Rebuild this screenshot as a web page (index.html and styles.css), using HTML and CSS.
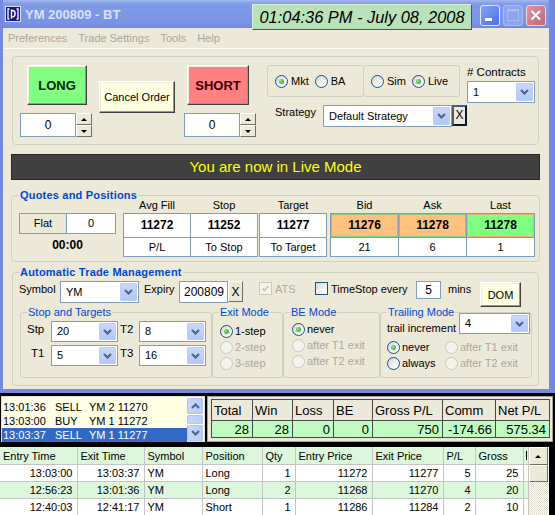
FILE: index.html
```html
<!DOCTYPE html>
<html lang="en">
<head>
    <meta charset="UTF-8">
    <title>YM 200809 - BT</title>
    <link rel="stylesheet" href="styles.css">
</head>
<body>
    <!-- MAIN WINDOW -->
    <div class="window">
        <div class="titlebar">
            <svg class="app-icon" width="16" height="16" viewBox="0 0 16 16">
                <rect x="0.5" y="0.5" width="15" height="15" fill="#16168a" stroke="#d8dcf4"/>
                <path d="M4.5 3H3v10h1.5M11.5 3H13v10h-1.5" stroke="#fff" stroke-width="1.3" fill="none"/>
                <path d="M6.5 3.5v9M6.5 4.2c2.6 0 3.6 1.5 3.6 3.4S9 11 7.4 11" stroke="#fff" stroke-width="1.4" fill="none"/>
            </svg>
            <span class="title">YM 200809 - BT</span>
            <div class="clock">01:04:36 PM - July 08, 2008</div>
            <span class="cap cap-min"><svg width="18" height="19"><rect x="4" y="12" width="7" height="3" fill="#fff"/></svg></span>
            <span class="cap cap-max"><svg width="18" height="19"><rect x="3.5" y="3.5" width="11" height="11" fill="none" stroke="#a9bbf0"/><rect x="3.5" y="3.5" width="11" height="2" fill="#a9bbf0"/></svg></span>
            <span class="cap cap-close"><svg width="18" height="19"><path d="M4.5 5l8.5 8.5M13 5l-8.5 8.5" stroke="#fff" stroke-width="2"/></svg></span>
        </div>

        <div class="menubar">
            <span>Preferences</span>
            <span>Trade Settings</span>
            <span>Tools</span>
            <span>Help</span>
        </div>

        <div class="client">
            <!-- ORDER ENTRY -->
            <div class="order-box">
                <div class="order-col">
                    <button class="btn3d big-btn long">LONG</button>
                    <div class="spinner">
                        <div class="spin-input">0</div>
                        <div class="spin-btns">
                            <span><i class="tri-up"></i></span>
                            <span><i class="tri-down"></i></span>
                        </div>
                    </div>
                </div>

                <button class="btn3d cancel-btn">Cancel Order</button>

                <div class="order-col short-col">
                    <button class="btn3d big-btn short">SHORT</button>
                    <div class="spinner">
                        <div class="spin-input">0</div>
                        <div class="spin-btns">
                            <span><i class="tri-up"></i></span>
                            <span><i class="tri-down"></i></span>
                        </div>
                    </div>
                </div>

                <div class="opts">
                    <div class="radio-row">
                        <div class="radio-box">
                            <span class="opt"><span class="radio on"></span>Mkt</span>
                            <span class="opt next"><span class="radio"></span>BA</span>
                        </div>
                        <div class="radio-box">
                            <span class="opt"><span class="radio"></span>Sim</span>
                            <span class="opt next"><span class="radio on"></span>Live</span>
                        </div>
                    </div>
                    <div class="strategy-row">
                        <span class="strategy-label">Strategy</span>
                        <div class="combo combo-strategy">
                            <span class="combo-text">Default Strategy</span>
                            <span class="combo-btn"><svg width="9" height="6"><path d="M1 1l3.5 3.5L8 1" stroke="#4d6185" stroke-width="2" fill="none"/></svg></span>
                        </div>
                        <button class="x-btn focused">X</button>
                    </div>
                </div>

                <div class="contracts">
                    <div class="contracts-label"># Contracts</div>
                    <div class="combo combo-contracts">
                        <span class="combo-text">1</span>
                        <span class="combo-btn"><svg width="9" height="6"><path d="M1 1l3.5 3.5L8 1" stroke="#4d6185" stroke-width="2" fill="none"/></svg></span>
                    </div>
                </div>
            </div>

            <div class="mode-bar">You are now in Live Mode</div>

            <!-- QUOTES AND POSITIONS -->
            <fieldset class="group quotes">
                <legend>Quotes and Positions</legend>
                <div class="quotes-row">
                    <div class="pos">
                        <div class="pos-row">
                            <span class="pos-flat">Flat</span>
                            <span class="pos-qty">0</span>
                        </div>
                        <div class="pos-time">00:00</div>
                    </div>

                    <div class="qgroup g1">
                        <div class="qcol">
                            <div class="qhead">Avg Fill</div>
                            <div class="qval">11272</div>
                            <div class="qsub">P/L</div>
                        </div>
                        <div class="qcol">
                            <div class="qhead">Stop</div>
                            <div class="qval">11252</div>
                            <div class="qsub">To Stop</div>
                        </div>
                    </div>

                    <div class="qgroup g2">
                        <div class="qcol">
                            <div class="qhead">Target</div>
                            <div class="qval">11277</div>
                            <div class="qsub">To Target</div>
                        </div>
                    </div>

                    <div class="qgroup g3">
                        <div class="qcol wide">
                            <div class="qhead">Bid</div>
                            <div class="qval bid">11276</div>
                            <div class="qsub">21</div>
                        </div>
                        <div class="qcol wide">
                            <div class="qhead">Ask</div>
                            <div class="qval bid">11278</div>
                            <div class="qsub">6</div>
                        </div>
                        <div class="qcol wide">
                            <div class="qhead">Last</div>
                            <div class="qval last">11278</div>
                            <div class="qsub">1</div>
                        </div>
                    </div>
                </div>
            </fieldset>

            <!-- AUTOMATIC TRADE MANAGEMENT -->
            <fieldset class="group atm">
                <legend>Automatic Trade Management</legend>
                <div class="atm-row">
                    <span class="lbl symbol-lbl">Symbol</span>
                    <div class="combo combo-symbol">
                        <span class="combo-text">YM</span>
                        <span class="combo-btn"><svg width="9" height="6"><path d="M1 1l3.5 3.5L8 1" stroke="#4d6185" stroke-width="2" fill="none"/></svg></span>
                    </div>
                    <span class="lbl expiry-lbl">Expiry</span>
                    <div class="text-box expiry">200809</div>
                    <button class="x-btn">X</button>
                    <span class="check dis ats-check"><svg width="11" height="11"><path d="M2.5 5.5l2 2 4-4.5" stroke="#cac8bb" stroke-width="1.8" fill="none"/></svg></span>
                    <span class="lbl ats-lbl">ATS</span>
                    <span class="check"></span>
                    <span class="lbl time-lbl">TimeStop every</span>
                    <div class="text-box mins-box">5</div>
                    <span class="lbl mins-lbl">mins</span>
                    <button class="btn3d dom-btn">DOM</button>
                </div>

                <div class="sub-row">
                    <fieldset class="sub st">
                        <legend>Stop and Targets</legend>
                        <div class="st-grid">
                            <span class="st-lbl">Stp</span>
                            <div class="combo">
                                <span class="combo-text">20</span>
                                <span class="combo-btn"><svg width="9" height="6"><path d="M1 1l3.5 3.5L8 1" stroke="#4d6185" stroke-width="2" fill="none"/></svg></span>
                            </div>
                            <span class="st-lbl pad2">T2</span>
                            <div class="combo">
                                <span class="combo-text">8</span>
                                <span class="combo-btn"><svg width="9" height="6"><path d="M1 1l3.5 3.5L8 1" stroke="#4d6185" stroke-width="2" fill="none"/></svg></span>
                            </div>
                            <span class="st-lbl pad4">T1</span>
                            <div class="combo">
                                <span class="combo-text">5</span>
                                <span class="combo-btn"><svg width="9" height="6"><path d="M1 1l3.5 3.5L8 1" stroke="#4d6185" stroke-width="2" fill="none"/></svg></span>
                            </div>
                            <span class="st-lbl pad2">T3</span>
                            <div class="combo">
                                <span class="combo-text">16</span>
                                <span class="combo-btn"><svg width="9" height="6"><path d="M1 1l3.5 3.5L8 1" stroke="#4d6185" stroke-width="2" fill="none"/></svg></span>
                            </div>
                        </div>
                    </fieldset>

                    <fieldset class="sub exit">
                        <legend>Exit Mode</legend>
                        <div class="radio-list">
                            <span class="opt"><span class="radio on"></span>1-step</span>
                            <span class="opt dis"><span class="radio off"></span>2-step</span>
                            <span class="opt dis"><span class="radio off"></span>3-step</span>
                        </div>
                    </fieldset>

                    <fieldset class="sub be">
                        <legend>BE Mode</legend>
                        <div class="radio-list">
                            <span class="opt"><span class="radio on"></span>never</span>
                            <span class="opt dis"><span class="radio off"></span>after T1 exit</span>
                            <span class="opt dis"><span class="radio off"></span>after T2 exit</span>
                        </div>
                    </fieldset>

                    <fieldset class="sub trail">
                        <legend>Trailing Mode</legend>
                        <div class="trail-row">
                            <span class="trail-lbl">trail increment</span>
                            <div class="combo combo-trail">
                                <span class="combo-text">4</span>
                                <span class="combo-btn"><svg width="9" height="6"><path d="M1 1l3.5 3.5L8 1" stroke="#4d6185" stroke-width="2" fill="none"/></svg></span>
                            </div>
                        </div>
                        <div class="trail-grid">
                            <span class="opt"><span class="radio on"></span>never</span>
                            <span class="opt dis"><span class="radio off"></span>after T1 exit</span>
                            <span class="opt"><span class="radio"></span>always</span>
                            <span class="opt dis"><span class="radio off"></span>after T2 exit</span>
                        </div>
                    </fieldset>
                </div>
            </fieldset>
        </div>
    </div>

    <!-- ORDER LOG / STATS / TRADES -->
    <div class="bottom">
        <div class="bottom-top">
            <div class="log">
                <div class="log-rows">
                    <div class="log-row"><span class="t">13:01:36</span><span class="a">SELL</span><span>YM 2 11270</span></div>
                    <div class="log-row"><span class="t">13:03:00</span><span class="a">BUY</span><span>YM 1 11272</span></div>
                    <div class="log-row selected"><span class="t">13:03:37</span><span class="a">SELL</span><span>YM 1 11277</span></div>
                </div>
                <div class="log-scroll">
                    <span class="sb-btn"><svg width="9" height="6"><path d="M1 5l3.5-3.5L8 5" stroke="#4d6185" stroke-width="2" fill="none"/></svg></span>
                    <span class="sb-thumb"></span>
                    <span class="sb-btn"><svg width="9" height="6"><path d="M1 1l3.5 3.5L8 1" stroke="#4d6185" stroke-width="2" fill="none"/></svg></span>
                </div>
            </div>

            <div class="stats">
                <table>
                    <colgroup>
                        <col style="width:41px"><col style="width:40px"><col style="width:41px"><col style="width:39px">
                        <col style="width:70px"><col style="width:53px"><col style="width:54px">
                    </colgroup>
                    <tr>
                        <th>Total</th><th>Win</th><th>Loss</th><th>BE</th><th>Gross P/L</th><th>Comm</th><th>Net P/L</th>
                    </tr>
                    <tr>
                        <td>28</td><td>28</td><td>0</td><td>0</td><td>750</td><td>-174.66</td><td>575.34</td>
                    </tr>
                </table>
            </div>
        </div>

        <div class="grid">
            <table>
                <colgroup>
                    <col style="width:77px"><col style="width:67px"><col style="width:58px"><col style="width:60px">
                    <col style="width:33px"><col style="width:77px"><col style="width:71px"><col style="width:32px">
                    <col style="width:48px"><col style="width:5px">
                </colgroup>
                <tr>
                    <th>Entry Time</th><th>Exit Time</th><th>Symbol</th><th>Position</th><th>Qty</th>
                    <th>Entry Price</th><th>Exit Price</th><th>P/L</th><th>Gross</th><th class="stub"><i></i></th>
                </tr>
                <tr>
                    <td class="r">13:03:00</td><td class="r">13:03:37</td><td>YM</td><td>Long</td><td class="r">1</td>
                    <td class="r">11272</td><td class="r">11277</td><td class="r">5</td><td class="r">25</td><td></td>
                </tr>
                <tr class="alt">
                    <td class="r">12:56:23</td><td class="r">13:01:36</td><td>YM</td><td>Long</td><td class="r">2</td>
                    <td class="r">11268</td><td class="r">11270</td><td class="r">4</td><td class="r">20</td><td></td>
                </tr>
                <tr>
                    <td class="r">12:40:03</td><td class="r">12:41:17</td><td>YM</td><td>Short</td><td class="r">1</td>
                    <td class="r">11286</td><td class="r">11284</td><td class="r">2</td><td class="r">10</td><td></td>
                </tr>
            </table>
            <div class="grid-scroll">
                <span class="cl-btn"><i class="tri-up"></i></span>
                <span class="cl-thumb"></span>
            </div>
        </div>
    </div>
</body>
</html>
```

FILE: styles.css
```css
/* === GENERAL === */
body {
    margin: 0;
    background-color: #000;
    font-family: "Liberation Sans", Arial, sans-serif;
    font-size: 11px;
    color: #000;
}

button {
    font: inherit;
    color: inherit;
    padding: 0;
    margin: 0;
    cursor: pointer;
}

/* === WINDOW FRAME === */
.window {
    width: 555px;
    height: 393px;
    box-sizing: border-box;
    background-color: #ece9d8;
    border-style: solid;
    border-color: #7489de;
    border-width: 0 6px 4px 3px;
}

.titlebar {
    position: relative;
    z-index: 1;
    display: flex;
    align-items: flex-start;
    height: 28px;
    padding-right: 3px;
    background: linear-gradient(to bottom, #a3b8ef 0%, #809be7 14%, #7893e5 85%, #6e87dc 100%);
}

.app-icon {
    margin: 6px 0 0 2px;
    flex-shrink: 0;
}

.title {
    margin: 7px 0 0 4px;
    line-height: 15px;
    font-size: 13px;
    font-weight: bold;
    color: #d8e2f8;
}

.clock {
    width: 220px;
    height: 26px;
    box-sizing: border-box;
    margin: 4px 8px 0 auto;
    background-color: #b9e2b9;
    border: 1px solid;
    border-color: #d8f0d8 #2f6a2f #2f6a2f #d8f0d8;
    font-size: 16.4px;
    font-style: italic;
    line-height: 24px;
    text-align: center;
    white-space: nowrap;
}

.cap {
    display: flex;
    width: 20px;
    height: 21px;
    box-sizing: border-box;
    margin: 5px 0 0 3px;
    border: 1px solid #dfe6fb;
    border-radius: 3px;
}

.cap-min {
    margin-left: 0;
    background: linear-gradient(135deg, #86a4f3, #4a6fe2);
}

.cap-max {
    background-color: #8ba4ec;
    border-color: #a9bbf0;
}

.cap-close {
    background: linear-gradient(135deg, #dc98a6, #bf6479);
    border-color: #eed3d9;
}

.menubar {
    display: flex;
    align-items: center;
    gap: 11px;
    height: 20px;
    padding-left: 5px;
    color: #aca899;
    border-bottom: 1px solid #fbfaf5;
}

/* === COMMON CONTROLS === */
.btn3d {
    box-sizing: border-box;
    border: 1px solid;
    border-color: #fff #404040 #404040 #fff;
    box-shadow: inset -1px -1px 0 #9a978a, inset 1px 1px 0 #f1efe4;
}

.combo {
    display: flex;
    height: 21px;
    box-sizing: border-box;
    border: 1px solid #7f9db9;
    background-color: #fff;
}

.combo-text {
    flex: 1;
    padding-left: 5px;
    line-height: 19px;
    white-space: nowrap;
    overflow: hidden;
}

.combo-btn {
    display: flex;
    align-items: center;
    justify-content: center;
    width: 17px;
    margin: 1px;
    border-radius: 2px;
    background: linear-gradient(to bottom, #cad9fd, #b1c6f7);
    box-shadow: inset 0 0 0 1px #bacbf4;
}

.x-btn {
    width: 15px;
    height: 21px;
    box-sizing: border-box;
    background-color: #ece9d8;
    border: 1px solid;
    border-color: #fff #716f64 #716f64 #fff;
    font-size: 12px;
    line-height: 18px;
}

.x-btn.focused {
    height: 21px;
    border: 2px solid #1e2a4c;
    border-color: #4a5a7e #0c1630 #0c1630 #4a5a7e;
    line-height: 17px;
}

.text-box {
    height: 22px;
    box-sizing: border-box;
    border: 1px solid #7f9db9;
    background-color: #fff;
    font-size: 12px;
    line-height: 20px;
}

.opt {
    display: flex;
    align-items: center;
    height: 16px;
    white-space: nowrap;
}

.opt.dis {
    color: #aca899;
}

.radio {
    display: inline-flex;
    align-items: center;
    justify-content: center;
    flex-shrink: 0;
    width: 13px;
    height: 13px;
    box-sizing: border-box;
    margin-right: 3px;
    border: 1px solid #1c5180;
    border-radius: 50%;
    background: linear-gradient(135deg, #d9d8d0 0%, #fff 85%);
}

.radio.on::after {
    content: "";
    width: 5px;
    height: 5px;
    border-radius: 50%;
    background: radial-gradient(circle at 35% 35%, #8be78b, #1b991b);
}

.radio.off {
    border-color: #cac8bb;
    background: #f4f3ee;
}

.check {
    display: flex;
    align-items: center;
    justify-content: center;
    flex-shrink: 0;
    width: 13px;
    height: 13px;
    box-sizing: border-box;
    margin-top: 1px;
    border: 1px solid #1c5180;
    background: linear-gradient(135deg, #dcdcd5, #fff);
}

.check.dis {
    border-color: #cac8bb;
    background: #f4f3ee;
}

.tri-up,
.tri-down {
    width: 0;
    height: 0;
    border-left: 3px solid transparent;
    border-right: 3px solid transparent;
}

.tri-up {
    border-bottom: 3px solid #000;
}

.tri-down {
    border-top: 3px solid #000;
}

/* === ORDER ENTRY === */
.client {
    padding-top: 7px;
}

.order-box {
    display: flex;
    align-items: flex-start;
    width: 527px;
    height: 89px;
    box-sizing: border-box;
    margin-left: 9px;
    padding: 8px 0 0 7px;
    border: 1px solid #d0d0bf;
    border-radius: 4px;
}

.order-col {
    display: flex;
    flex-direction: column;
    flex-shrink: 0;
    width: 72px;
}

.big-btn {
    width: 60px;
    height: 40px;
    margin-left: 7px;
    font-size: 13px;
    font-weight: bold;
}

.long {
    background-color: #80ff80;
    color: #052505;
}

.short-col {
    margin-left: 9px;
}

.short-col .big-btn {
    width: 62px;
    margin-left: 3px;
}

.short {
    background-color: #ff8080;
    color: #3a0000;
}

.spinner {
    display: flex;
    height: 24px;
    margin-top: 8px;
}

.spin-input {
    width: 56px;
    box-sizing: border-box;
    border: 1px solid #7f9db9;
    background-color: #fff;
    font-size: 12px;
    line-height: 22px;
    text-align: center;
}

.spin-btns {
    display: flex;
    flex-direction: column;
    width: 16px;
}

.spin-btns span {
    display: flex;
    flex: 1;
    align-items: center;
    justify-content: center;
    background-color: #ece9d8;
    border: 1px solid;
    border-color: #fff #716f64 #716f64 #fff;
}

.cancel-btn {
    flex-shrink: 0;
    width: 76px;
    height: 32px;
    margin: 16px 0 0 7px;
    background-color: #ffffe1;
}

.opts {
    flex-shrink: 0;
    width: 200px;
    margin-left: 11px;
}

.radio-row {
    display: flex;
}

.radio-box {
    display: flex;
    align-items: center;
    width: 97px;
    height: 32px;
    box-sizing: border-box;
    padding-left: 7px;
    border: 1px solid #d0d0bf;
    border-radius: 3px;
}

.radio-box + .radio-box {
    margin-left: -1px;
}

.opt.next {
    margin-left: 6px;
}

.strategy-row {
    display: flex;
    align-items: flex-start;
    margin-top: 8px;
    padding-left: 8px;
}

.strategy-label {
    width: 48px;
    line-height: 14px;
}

.combo-strategy {
    width: 129px;
    height: 22px;
}

.combo-strategy .combo-text {
    line-height: 20px;
}

.contracts {
    flex-shrink: 0;
}

.contracts-label {
    line-height: 15px;
    font-size: 11.5px;
}

.combo-contracts {
    width: 68px;
    height: 22px;
    margin-top: 1px;
}

.combo-contracts .combo-text {
    line-height: 20px;
}

.mode-bar {
    width: 529px;
    height: 26px;
    box-sizing: border-box;
    margin: 9px 0 0 8px;
    background-color: #404040;
    border: 1px solid #262626;
    color: #ffff00;
    font-size: 15px;
    line-height: 24px;
    text-align: center;
}

/* === GROUP BOXES === */
.group,
.sub {
    min-width: 0;
    box-sizing: border-box;
    border: 1px solid #d0d0bf;
    border-radius: 4px;
}

.group > legend,
.sub > legend {
    padding: 0 1px;
    color: #0046d5;
}

.group > legend {
    font-weight: bold;
    line-height: 13px;
    letter-spacing: 0.2px;
}

.sub > legend {
    font-weight: normal;
    line-height: 14px;
}

/* === QUOTES === */
.quotes {
    width: 529px;
    margin: 9px 0 0 8px;
    padding: 0 5px 4px 7px;
}

.quotes-row {
    display: flex;
    align-items: flex-start;
    margin-top: -5px;
}

.pos {
    flex-shrink: 0;
    width: 97px;
    margin-top: 16px;
}

.pos-row {
    display: flex;
    height: 21px;
}

.pos-flat,
.pos-qty {
    box-sizing: border-box;
    border: 1px solid #7f9db9;
    line-height: 19px;
    text-align: center;
}

.pos-flat {
    width: 48px;
}

.pos-qty {
    width: 50px;
    margin-left: -1px;
    background-color: #fff;
}

.pos-time {
    margin-top: 4px;
    font-size: 12px;
    font-weight: bold;
    line-height: 15px;
    text-align: center;
}

.qgroup {
    display: flex;
    flex-shrink: 0;
}

.g1 {
    margin-left: 7px;
}

.g2 {
    margin-left: 1px;
}

.g3 {
    margin-left: 3px;
}

.qcol {
    width: 68px;
}

.qcol.wide {
    width: 69px;
}

.qcol + .qcol {
    margin-left: -1px;
}

.qhead {
    height: 16px;
    line-height: 16px;
    text-align: center;
}

.qval,
.qsub {
    box-sizing: border-box;
    border: 1px solid #7f9db9;
    background-color: #fff;
    text-align: center;
}

.qval {
    height: 25px;
    font-size: 12px;
    font-weight: bold;
    line-height: 23px;
}

.qsub {
    height: 19px;
    border-top: none;
    line-height: 18px;
}

.qval.bid {
    background-color: #ffc080;
    box-shadow: inset 0 0 0 1px #80d080;
}

.qval.last {
    background-color: #80ff80;
    box-shadow: inset 0 0 0 1px #f0b070;
}

/* === AUTOMATIC TRADE MANAGEMENT === */
.atm {
    width: 527px;
    height: 120px;
    margin: 4px 0 0 9px;
    padding: 2px 6px 0 6px;
}

.atm-row {
    display: flex;
    align-items: flex-start;
    height: 24px;
}

.atm-row > * {
    flex-shrink: 0;
}

.lbl {
    line-height: 16px;
}

.symbol-lbl {
    width: 41px;
}

.combo-symbol {
    width: 79px;
    height: 22px;
}

.combo-symbol .combo-text {
    line-height: 20px;
}

.expiry-lbl {
    width: 35px;
    margin-left: 5px;
}

.expiry {
    width: 49px;
    padding-left: 4px;
}

.ats-check {
    margin-left: 16px;
}

.ats-lbl {
    width: 40px;
    padding-left: 3px;
    color: #aca899;
}

.time-lbl {
    width: 85px;
    padding-left: 3px;
}

.mins-box {
    width: 25px;
    height: 18px;
    line-height: 16px;
    text-align: center;
}

.mins-lbl {
    width: 32px;
    margin-left: 7px;
}

.dom-btn {
    width: 41px;
    height: 25px;
    margin-top: 1px;
    background-color: #ffffe1;
}

.sub-row {
    display: flex;
    margin-left: 1px;
}

.sub {
    flex-shrink: 0;
    height: 73px;
    margin: 0;
    padding: 0 0 0 6px;
    border-radius: 3px;
}

.st {
    width: 192px;
}

.exit {
    width: 71px;
}

.be {
    width: 97px;
}

.trail {
    width: 152px;
}

.st-grid {
    display: grid;
    grid-template-columns: 24px 67px 21px 67px;
    grid-template-rows: 21px 21px;
    row-gap: 3px;
    margin-top: 2px;
}

.st-lbl {
    font-size: 11.5px;
    line-height: 16px;
}

.pad2 {
    padding-left: 2px;
}

.pad4 {
    padding-left: 4px;
}

.radio-list {
    display: flex;
    flex-direction: column;
}

.exit .radio-list {
    margin: 4px 0 0 1px;
}

.be .radio-list {
    margin: 2px 0 0 2px;
}

.be .radio,
.trail .radio,
.exit .radio {
    margin-right: 2px;
}

.trail-row {
    display: flex;
    align-items: flex-start;
    margin-top: -6px;
}

.trail-lbl {
    width: 72px;
    margin-top: 7px;
    line-height: 16px;
    white-space: nowrap;
}

.combo-trail {
    width: 71px;
}

.trail-grid {
    display: grid;
    grid-template-columns: 58px auto;
    margin-top: 3px;
}

/* === BOTTOM PANELS === */
.bottom {
    height: 122px;
    box-sizing: border-box;
    padding-top: 3px;
    overflow: hidden;
}

.bottom-top {
    display: flex;
    align-items: flex-start;
}

.log {
    display: flex;
    width: 204px;
    height: 46px;
    box-sizing: border-box;
    margin-left: 1px;
    border: 1px solid #e4e2d4;
    background-color: #ffffe6;
}

.log-rows {
    width: 185px;
    padding-top: 3px;
}

.log-row {
    display: flex;
    height: 14px;
    padding-left: 1px;
    line-height: 14px;
    white-space: nowrap;
}

.log-row .t {
    width: 52px;
}

.log-row .a {
    width: 34px;
}

.log-row.selected {
    background-color: #316ac5;
    color: #fff;
}

.log-scroll {
    display: flex;
    flex-direction: column;
    gap: 1px;
    width: 16px;
    margin-top: 1px;
}

.sb-btn,
.sb-thumb {
    display: flex;
    align-items: center;
    justify-content: center;
    border-radius: 2px;
    background: linear-gradient(to right, #c9d8fc, #b6cbf9);
    box-shadow: inset 0 0 0 1px #b2c6f3;
}

.sb-btn {
    height: 16px;
}

.sb-thumb {
    height: 10px;
}

.stats {
    margin-left: 2px;
    padding: 2px 2px 3px 3px;
    border: 1px solid #a0a0a0;
    background-color: #ece9d8;
}

.stats table {
    width: 338px;
    table-layout: fixed;
    border-collapse: collapse;
    font-size: 13px;
}

.stats th,
.stats td {
    padding: 0 3px 0 2px;
    border: 1px solid #4a4a4a;
    white-space: nowrap;
    overflow: hidden;
}

.stats th {
    height: 20px;
    font-weight: normal;
    text-align: left;
}

.stats td {
    height: 16px;
    background-color: #c0fcc0;
    text-align: right;
}

.grid {
    display: flex;
    width: 549px;
    height: 68px;
    margin-top: 5px;
    overflow: hidden;
    background-color: #fff;
}

.grid table {
    flex-shrink: 0;
    width: 528px;
    table-layout: fixed;
    border-collapse: collapse;
}

.grid th,
.grid td {
    padding: 0 4px 0 3px;
    border-right: 1px solid #c4c4c4;
    border-bottom: 1px solid #c4c4c4;
    white-space: nowrap;
    overflow: hidden;
}

.grid th {
    height: 17px;
    background-color: #ddf7dd;
    font-weight: normal;
    text-align: left;
}

.grid th.stub {
    padding: 0 0 0 2px;
}

.grid th.stub i {
    display: block;
    width: 1px;
    height: 9px;
    background-color: #000;
}

.grid td {
    height: 16px;
}

.grid td.r {
    text-align: right;
}

.grid tr.alt td {
    background-color: #ddf7dd;
}

.grid-scroll {
    display: flex;
    flex-direction: column;
    width: 19px;
    background: repeating-conic-gradient(#fff 0 25%, #dcd9cf 0 50%) 0 0 / 2px 2px;
}

.cl-btn,
.cl-thumb {
    display: flex;
    align-items: center;
    justify-content: center;
    box-sizing: border-box;
    background-color: #ece9d8;
    border: 1px solid;
    border-color: #fff #716f64 #716f64 #fff;
}

.cl-btn {
    height: 18px;
}

.cl-thumb {
    height: 17px;
}
```
